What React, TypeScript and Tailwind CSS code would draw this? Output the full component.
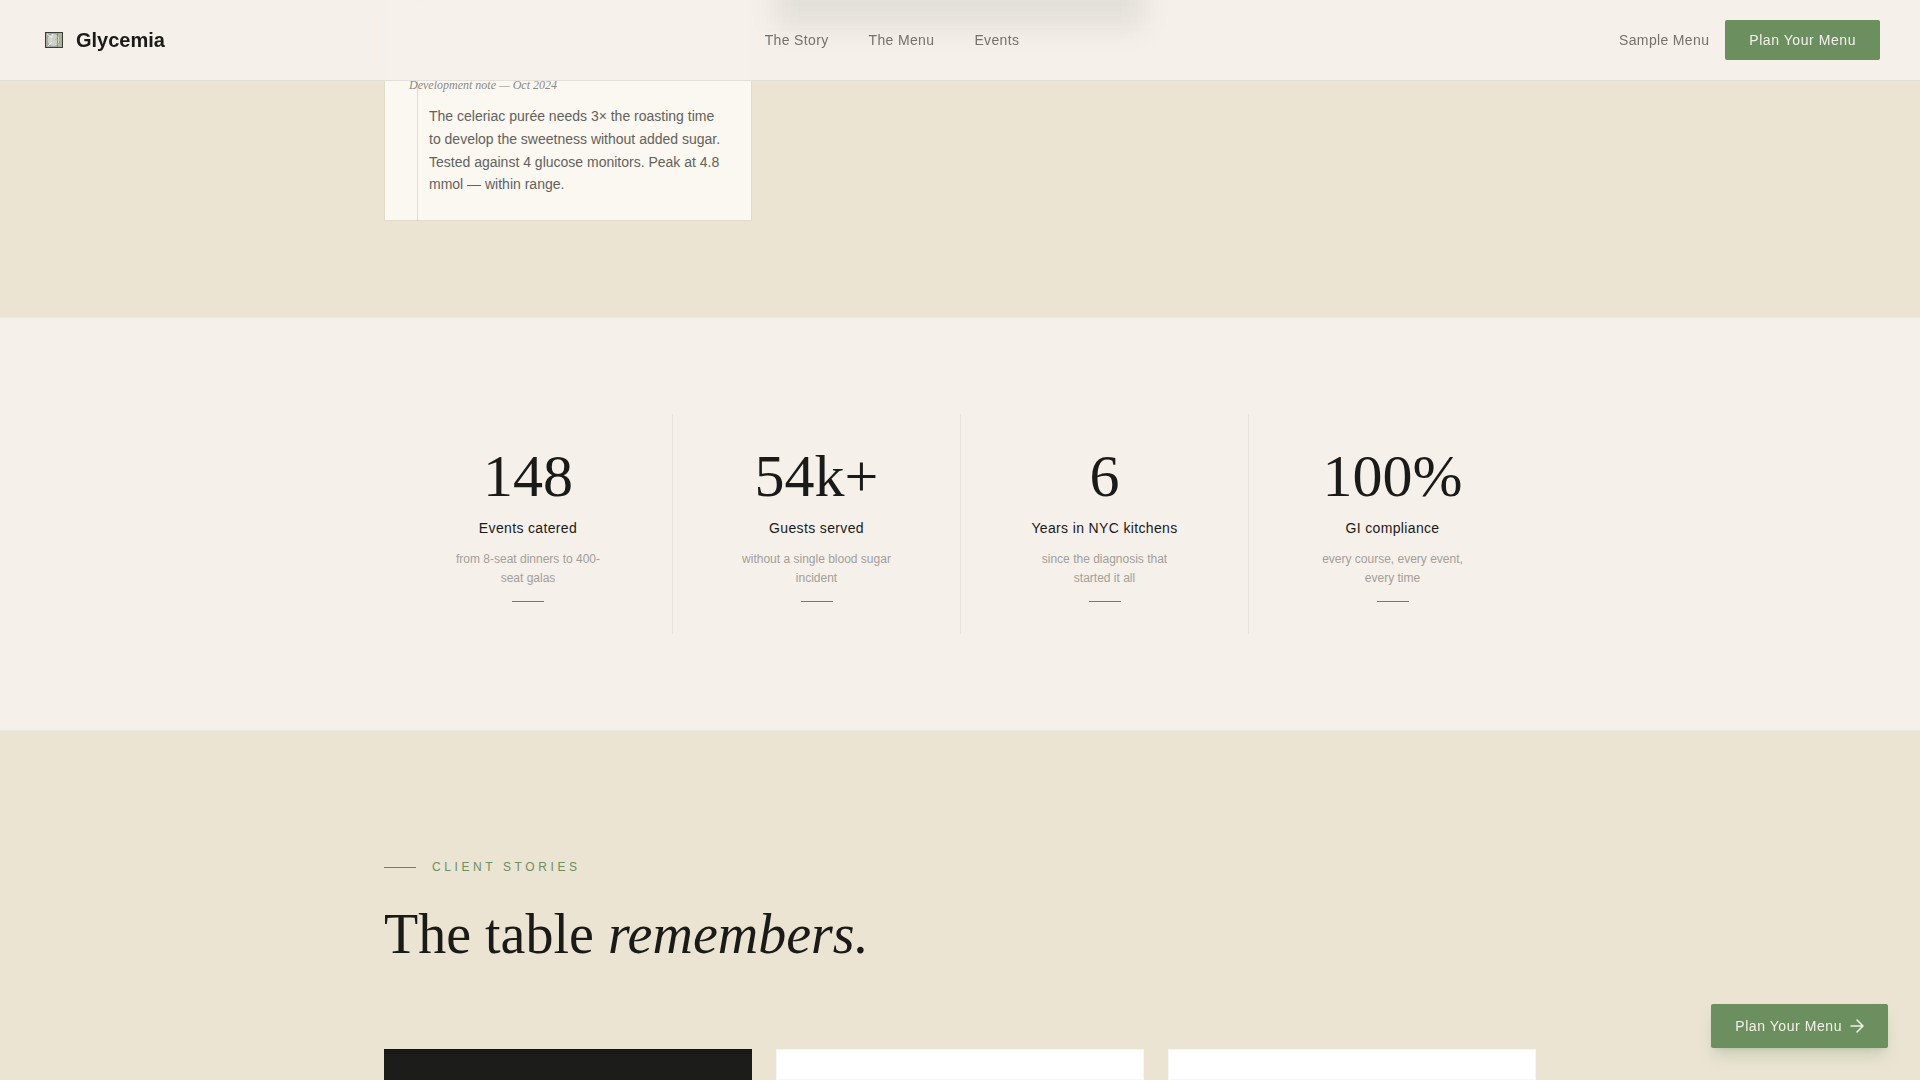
import React from "react";

interface Stat {
  value: string;
  label: string;
  detail: string;
}

const NAV_LINKS = ["The Story", "The Menu", "Events"];

const STATS: Stat[] = [
  { value: "148", label: "Events catered", detail: "from 8-seat dinners to 400-seat galas" },
  { value: "54k+", label: "Guests served", detail: "without a single blood sugar incident" },
  { value: "6", label: "Years in NYC kitchens", detail: "since the diagnosis that started it all" },
  { value: "100%", label: "GI compliance", detail: "every course, every event, every time" },
];

// Small square plate mark next to the brand name
function LogoMark() {
  return (
    <svg width="28" height="28" viewBox="0 0 28 28" aria-hidden="true">
      <rect x="5.5" y="6.5" width="17" height="15" fill="#a9ada1" stroke="#3c3c38" />
      <circle cx="13.5" cy="14" r="6.5" fill="#d0d2c9" stroke="#9da296" />
      <path d="M7 8l5 4M8 20l4-4M13 8l-2 4" stroke="#f1f1ec" fill="none" />
      <path d="M17.5 7v14" stroke="#7d9a5b" />
      <path d="M15 14c2-3 3-4 6-6M15 14h6M16 17l5 3" stroke="#b3c68c" fill="none" />
    </svg>
  );
}

function ArrowIcon() {
  return (
    <svg
      width="14"
      height="14"
      viewBox="0 0 14 14"
      fill="none"
      stroke="currentColor"
      strokeWidth="1.5"
      strokeLinecap="round"
      strokeLinejoin="round"
      aria-hidden="true"
    >
      <path d="M1 7h12M7 1l6 6-6 6" />
    </svg>
  );
}

function Header() {
  return (
    <header className="fixed inset-x-0 top-0 z-20 flex items-center justify-between overflow-hidden border-b border-[#1a1a18]/8 bg-[#f5f0ea]/95 px-10 py-5 text-sm backdrop-blur-md">
      {/* Shade of the card that has scrolled under the bar */}
      <div className="absolute inset-x-0 -top-10 -z-10 mx-auto grid max-w-6xl grid-cols-3 gap-6">
        <div className="col-start-2 h-17 bg-[#1a2a20]/8 blur-md" />
      </div>
      <a href="#top" className="flex items-center gap-2 text-xl font-bold text-[#1a1a18]">
        <LogoMark />
        Glycemia
      </a>
      <nav className="flex gap-10 tracking-wide text-[#75716c]">
        {NAV_LINKS.map(link => (
          <a key={link} href="#top">
            {link}
          </a>
        ))}
      </nav>
      <div className="flex items-center gap-4 tracking-wide">
        <a href="#menu" className="text-[#75716c]">
          Sample Menu
        </a>
        <button className="h-10 rounded-xs bg-[#6b8f5e] px-6 tracking-[0.04em] text-[#f5f0ea]">
          Plan Your Menu
        </button>
      </div>
    </header>
  );
}

function RecipeNotes() {
  return (
    <section id="menu" className="bg-[#ebe4d3] pb-24">
      <div className="mx-auto grid max-w-6xl grid-cols-3 gap-6">
        <article className="relative border border-[#1a1a18]/4 bg-[#fbf8f2] bg-clip-padding px-6 pt-18 pb-6">
          <div className="absolute top-0 -bottom-px left-8 w-px bg-[#1a1a18]/12" />
          <p className="relative font-['Liberation_Serif',serif] text-xs leading-6 text-[#8b8882] italic">
            Development note — Oct 2024
          </p>
          <p className="mt-2 pl-5 text-sm leading-relaxed text-[#63615c]">
            The celeriac purée needs 3× the roasting time to develop the sweetness without added
            sugar. Tested against 4 glucose monitors. Peak at 4.8 mmol — within range.
          </p>
        </article>
      </div>
    </section>
  );
}

function Stats() {
  return (
    <section className="border-y border-[#1a1a18]/4 bg-[#f5f0ea] py-24">
      <div className="mx-auto grid max-w-6xl grid-cols-4">
        {STATS.map(stat => (
          <div
            key={stat.label}
            className="flex flex-col items-center border-[#1a1a18]/6 px-16 py-8 text-center not-first:border-l"
          >
            <p className="font-['Liberation_Serif',serif] text-6xl leading-[60px] text-[#1a1a18]">
              {stat.value}
            </p>
            <p className="mt-3 text-sm tracking-wide whitespace-nowrap text-[#1a1a18]">{stat.label}</p>
            <p className="mt-3 text-xs leading-[19px] text-[#a39f99]">{stat.detail}</p>
            <span className="mt-[13px] h-px w-8 bg-[#6b8560]" />
          </div>
        ))}
      </div>
    </section>
  );
}

function ClientStories() {
  return (
    <section className="flex flex-1 flex-col bg-[#ebe4d3] pt-32">
      <div className="mx-auto flex w-full max-w-6xl flex-1 flex-col">
        <p className="flex items-center gap-4 text-xs leading-4 tracking-[0.3em] text-[#6b8f5e] uppercase">
          <span className="h-px w-8 bg-[#6b8560]" />
          Client stories
        </p>
        <h2 className="mt-6 font-['Liberation_Serif',serif] text-[56px] leading-[70px] text-[#1a1a18]">
          The table <em>remembers.</em>
        </h2>
        <div className="mt-20 grid flex-1 grid-cols-3 gap-6">
          <article className="bg-[#1c1c1a]">
            <div className="h-1.5 bg-[repeating-linear-gradient(to_bottom,#11110f_0px,#11110f_1px,#20201e_1px,#20201e_2px)]" />
          </article>
          <article className="border border-[#1a1a18]/4 bg-white" />
          <article className="border border-[#1a1a18]/4 bg-white" />
        </div>
      </div>
    </section>
  );
}

export default function App() {
  return (
    <div
      id="top"
      className="flex h-screen flex-col overflow-hidden bg-[#ebe4d3] font-['Liberation_Sans',Arial,sans-serif]"
    >
      <Header />
      <RecipeNotes />
      <Stats />
      <ClientStories />

      {/* Floating call to action */}
      <button className="fixed right-8 bottom-8 z-30 flex h-11 items-center gap-2 rounded-xs bg-[#6b8f5e] px-6 text-sm tracking-[0.04em] text-[#f5f0ea] shadow-lg shadow-[#6b8f5e]/25">
        Plan Your Menu
        <ArrowIcon />
      </button>
    </div>
  );
}
